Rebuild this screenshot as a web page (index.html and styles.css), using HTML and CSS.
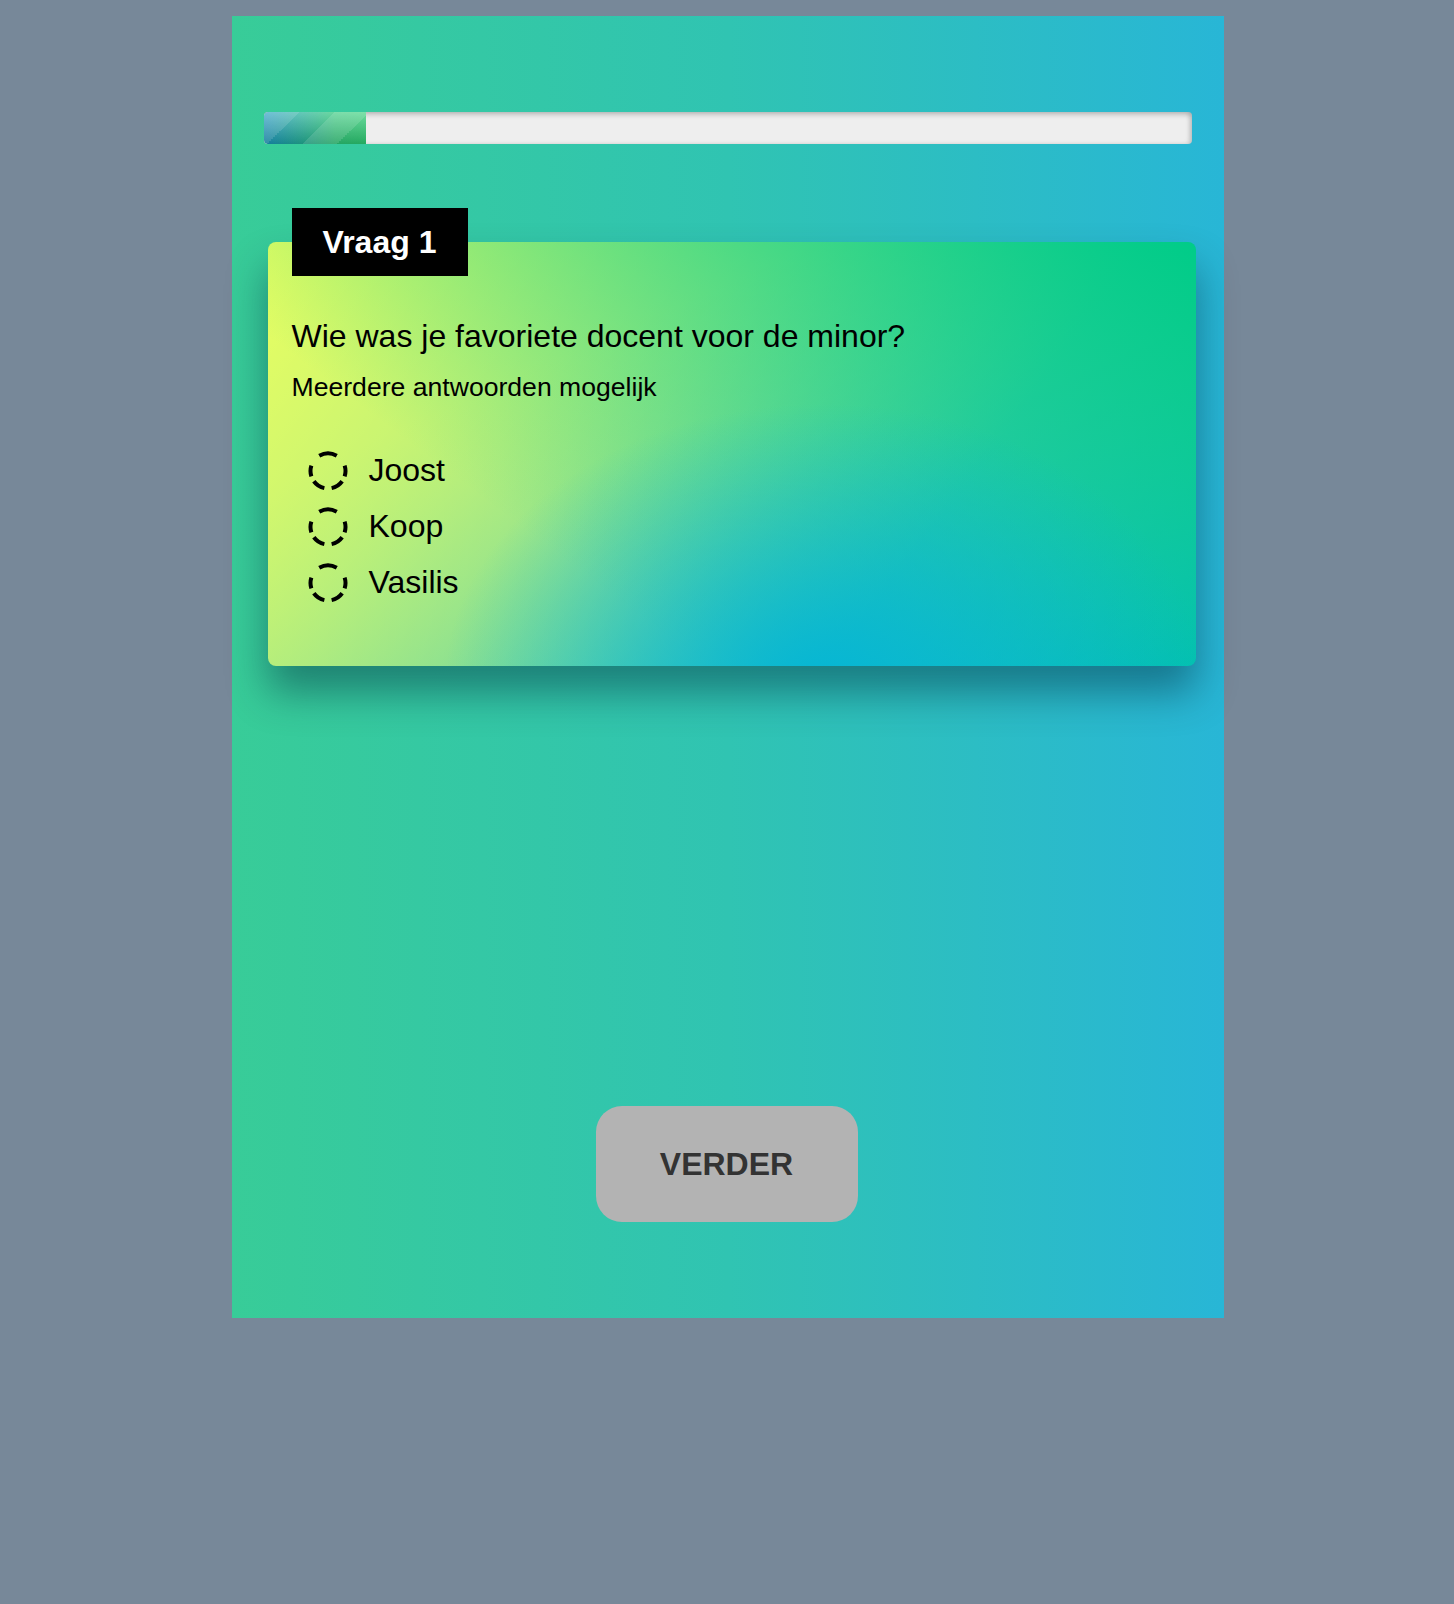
FILE: index.html
```html
<!DOCTYPE html>
<html lang="nl">
<head>
<meta charset="utf-8">
<title>Vraag 1</title>
<link rel="stylesheet" href="styles.css">
</head>
<body>
<main class="quiz">
  <div class="progress"><div class="progress-fill" style="width: 11%"></div></div>
  <section class="question">
    <h2 class="question-label">Vraag 1</h2>
    <div class="card">
      <p class="question-title">Wie was je favoriete docent voor de minor?</p>
      <p class="question-hint">Meerdere antwoorden mogelijk</p>
      <ul class="options">
        <li class="option">
          <svg class="radio" viewBox="0 0 40 40" aria-hidden="true"><path d="M11.25 4.84A17.5 17.5 0 0 1 28.75 4.84M36.64 14.59A17.5 17.5 0 0 1 36.64 25.41M34.16 30.29A17.5 17.5 0 0 1 23.64 37.12M16.36 37.12A17.5 17.5 0 0 1 5.84 30.29M3.36 25.41A17.5 17.5 0 0 1 3.36 14.59"/></svg>
          <span class="option-text">Joost</span>
        </li>
        <li class="option">
          <svg class="radio" viewBox="0 0 40 40" aria-hidden="true"><path d="M11.25 4.84A17.5 17.5 0 0 1 28.75 4.84M36.64 14.59A17.5 17.5 0 0 1 36.64 25.41M34.16 30.29A17.5 17.5 0 0 1 23.64 37.12M16.36 37.12A17.5 17.5 0 0 1 5.84 30.29M3.36 25.41A17.5 17.5 0 0 1 3.36 14.59"/></svg>
          <span class="option-text">Koop</span>
        </li>
        <li class="option">
          <svg class="radio" viewBox="0 0 40 40" aria-hidden="true"><path d="M11.25 4.84A17.5 17.5 0 0 1 28.75 4.84M36.64 14.59A17.5 17.5 0 0 1 36.64 25.41M34.16 30.29A17.5 17.5 0 0 1 23.64 37.12M16.36 37.12A17.5 17.5 0 0 1 5.84 30.29M3.36 25.41A17.5 17.5 0 0 1 3.36 14.59"/></svg>
          <span class="option-text">Vasilis</span>
        </li>
      </ul>
    </div>
  </section>
  <button class="next" type="button">VERDER</button>
</main>
</body>
</html>
```
FILE: styles.css
```css
html {
  background: #778899;
}
body {
  margin: 0;
  padding-left: 1px;
  font-family: "Liberation Sans", Arial, sans-serif;
  min-height: 1604px;
  background: #778899;
}
.quiz {
  width: 992px;
  margin: 16px auto 0;
  box-sizing: border-box;
  padding: 96px 32px 96px;
  background: linear-gradient(to right, #38cc98, #30c4b2 50%, #28b6d6);
  display: flex;
  flex-direction: column;
}
.progress {
  height: 32px;
  border-radius: 4px;
  background: #eeeeee;
  box-shadow: inset 0 3px 5px rgba(0, 0, 0, 0.18), inset -3px 0 4px rgba(0, 0, 0, 0.12);
  overflow: hidden;
}
.progress-fill {
  height: 100%;
  border-radius: 4px 0 0 4px;
  background:
    linear-gradient(135deg, rgba(255,255,255,0.12) 25%, transparent 25%, transparent 50%, rgba(255,255,255,0.12) 50%, rgba(255,255,255,0.12) 75%, transparent 75%, transparent) 0 0 / 70px 70px,
    linear-gradient(to bottom, rgba(255,255,255,0.3), rgba(0,0,0,0.18)),
    linear-gradient(to right, #1898c0, #2cc878 70%, #2ccf74);
}
.question {
  position: relative;
  margin-top: 64px;
  padding-top: 34px;
}
.question-label {
  position: absolute;
  top: 0;
  left: 28px;
  z-index: 2;
  margin: 0;
  width: 176px;
  height: 68px;
  background: #000;
  color: #fff;
  font-size: 32px;
  font-weight: bold;
  line-height: 68px;
  text-align: center;
}
.card {
  margin: 0 -4px 0 4px;
  padding: 76px 24px 55px;
  border-radius: 8px;
  background:
    radial-gradient(ellipse 380px 280px at 60% 104%, rgba(6,182,212,1) 0%, rgba(6,182,212,0.55) 45%, rgba(6,182,212,0) 100%),
    linear-gradient(217deg, #00cc88, rgba(0,204,136,0) 70.71%),
    linear-gradient(127deg, #eaff60, rgba(234,255,96,0) 70.71%),
    linear-gradient(336deg, #06b6d4, rgba(6,182,212,0) 70.71%),
    #7edc9a;
  box-shadow: 0 26px 40px rgba(0, 40, 60, 0.45);
}
.question-title {
  margin: 0;
  font-size: 32px;
  line-height: 36px;
  color: #000;
}
.question-hint {
  margin: 18px 0 0;
  font-size: 26.6px;
  line-height: 30px;
  color: #000;
}
.options {
  list-style: none;
  margin: 41px 0 0;
  padding: 0 0 0 16px;
}
.option {
  display: flex;
  align-items: center;
  height: 56px;
}
.radio {
  width: 40px;
  height: 40px;
  flex: none;
  fill: none;
  stroke: #000;
  stroke-width: 4;
}
.option-text {
  margin-left: 21px;
  font-size: 32px;
  line-height: 36px;
  margin-top: -2px;
  color: #000;
}
.next {
  align-self: center;
  margin: 440px 2px 0 0;
  width: 262px;
  height: 116px;
  border: none;
  border-radius: 26px;
  background: #b3b3b3;
  color: #333;
  font-family: "Liberation Sans", Arial, sans-serif;
  font-size: 32px;
  font-weight: bold;
  padding: 0;
}
```
